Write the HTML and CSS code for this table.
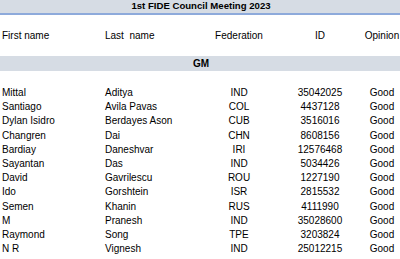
FILE: index.html
```html
<!DOCTYPE html>
<html>
<head>
<meta charset="utf-8">
<link rel="stylesheet" href="styles.css">
</head>
<body>
<div class="sheet">
  <div class="title">1st FIDE Council Meeting 2023</div>
  <div class="row head">
    <div class="c1">First name</div><div class="c2">Last&nbsp; name</div><div class="c3">Federation</div><div class="c4">ID</div><div class="c5">Opinion</div>
  </div>
  <div class="group">GM</div>
  <div class="spacer"></div>
  <div class="rows">
    <div class="row"><div class="c1">Mittal</div><div class="c2">Aditya</div><div class="c3">IND</div><div class="c4">35042025</div><div class="c5">Good</div></div>
    <div class="row"><div class="c1">Santiago</div><div class="c2">Avila Pavas</div><div class="c3">COL</div><div class="c4">4437128</div><div class="c5">Good</div></div>
    <div class="row"><div class="c1">Dylan Isidro</div><div class="c2">Berdayes Ason</div><div class="c3">CUB</div><div class="c4">3516016</div><div class="c5">Good</div></div>
    <div class="row"><div class="c1">Changren</div><div class="c2">Dai</div><div class="c3">CHN</div><div class="c4">8608156</div><div class="c5">Good</div></div>
    <div class="row"><div class="c1">Bardiay</div><div class="c2">Daneshvar</div><div class="c3">IRI</div><div class="c4">12576468</div><div class="c5">Good</div></div>
    <div class="row"><div class="c1">Sayantan</div><div class="c2">Das</div><div class="c3">IND</div><div class="c4">5034426</div><div class="c5">Good</div></div>
    <div class="row"><div class="c1">David</div><div class="c2">Gavrilescu</div><div class="c3">ROU</div><div class="c4">1227190</div><div class="c5">Good</div></div>
    <div class="row"><div class="c1">Ido</div><div class="c2">Gorshtein</div><div class="c3">ISR</div><div class="c4">2815532</div><div class="c5">Good</div></div>
    <div class="row"><div class="c1">Semen</div><div class="c2">Khanin</div><div class="c3">RUS</div><div class="c4">4111990</div><div class="c5">Good</div></div>
    <div class="row"><div class="c1">M</div><div class="c2">Pranesh</div><div class="c3">IND</div><div class="c4">35028600</div><div class="c5">Good</div></div>
    <div class="row"><div class="c1">Raymond</div><div class="c2">Song</div><div class="c3">TPE</div><div class="c4">3203824</div><div class="c5">Good</div></div>
    <div class="row"><div class="c1">N R</div><div class="c2">Vignesh</div><div class="c3">IND</div><div class="c4">25012215</div><div class="c5">Good</div></div>
  </div>
</div>
</body>
</html>
```
FILE: styles.css
```css
html, body {
  margin: 0;
  padding: 0;
  background: #ffffff;
}
body {
  font-family: "Liberation Sans", Arial, sans-serif;
  font-size: 10px;
  color: #000000;
  width: 400px;
  height: 259px;
  overflow: hidden;
}
.sheet {
  width: 402px;
}
.title {
  height: 13px;
  line-height: 12px;
  background: #d6dce4;
  border-bottom: 2px solid #8eaadb;
  text-align: center;
  font-weight: bold;
  font-size: 9.6px;
  color: #000;
}
.row {
  display: grid;
  grid-template-columns: 103px 97px 78px 84px 40px;
  height: 14.2px;
  line-height: 14.2px;
  white-space: nowrap;
}
.head {
  height: 41px;
  line-height: 41px;
}
.c1, .c2 {
  padding-left: 2px;
}
.c3, .c4, .c5 {
  text-align: center;
}
.group {
  height: 15px;
  line-height: 15px;
  background: #d6dce4;
  text-align: center;
  font-weight: bold;
  color: #000;
}
.spacer {
  height: 15px;
}
```
